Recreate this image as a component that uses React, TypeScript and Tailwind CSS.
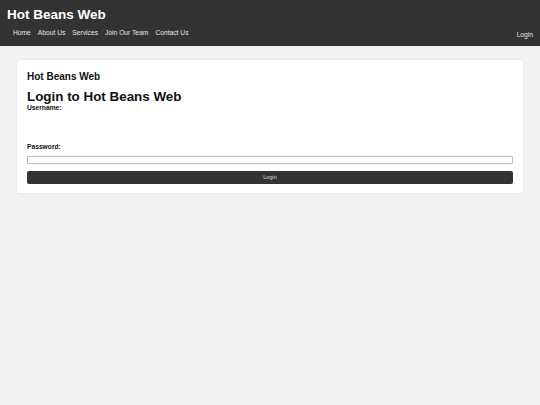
export default function App() {
  const links = ["Home", "About Us", "Services", "Join Our Team", "Contact Us"];

  return (
    <div className="min-h-[405px] bg-[#f2f2f2] font-['Liberation_Sans',Arial,sans-serif] text-[#111]">
      {/* Header */}
      <header className="h-[46px] bg-[#333333] px-[7px] flex flex-col">
        <div className="pt-[7px] text-[13.5px] leading-[16px] font-bold text-white">Hot Beans Web</div>
        <div className="flex items-end justify-between">
          <nav className="flex gap-[7px] pl-[6px] pt-[6px] text-[6.7px] leading-[8px] text-[#e6e6e6]">
            {links.map((l) => (
              <span key={l}>{l}</span>
            ))}
          </nav>
          <span className="text-[6.7px] leading-[8px] text-[#e6e6e6] translate-y-[2px]">Login</span>
        </div>
      </header>

      {/* Card */}
      <main className="px-[17px] pt-[14px]">
        <div className="bg-white rounded-[3px] shadow-[0_0_3px_rgba(0,0,0,0.08)] px-[10px] pt-[10.5px] pb-[9px]">
          <h2 className="text-[10px] leading-[11.5px] font-bold">Hot Beans Web</h2>
          <h1 className="mt-[6.5px] text-[13.4px] leading-[15.4px] font-bold">Login to Hot Beans Web</h1>
          <form className="flex flex-col">
            <label className="text-[6.7px] leading-[7.7px] font-bold">Username:</label>
            <div className="h-[31.5px]" />
            <label className="text-[6.7px] leading-[7.7px] font-bold">Password:</label>
            <input
              type="password"
              className="mt-[5px] h-[8px] w-full border border-[#bdbdbd] rounded-[1px] outline-none"
            />
            <button
              type="button"
              className="mt-[7px] h-[13px] w-full bg-[#333333] rounded-[2px] text-[5.5px] text-[#d9d9d9]"
            >
              Login
            </button>
          </form>
        </div>
      </main>
    </div>
  );
}
